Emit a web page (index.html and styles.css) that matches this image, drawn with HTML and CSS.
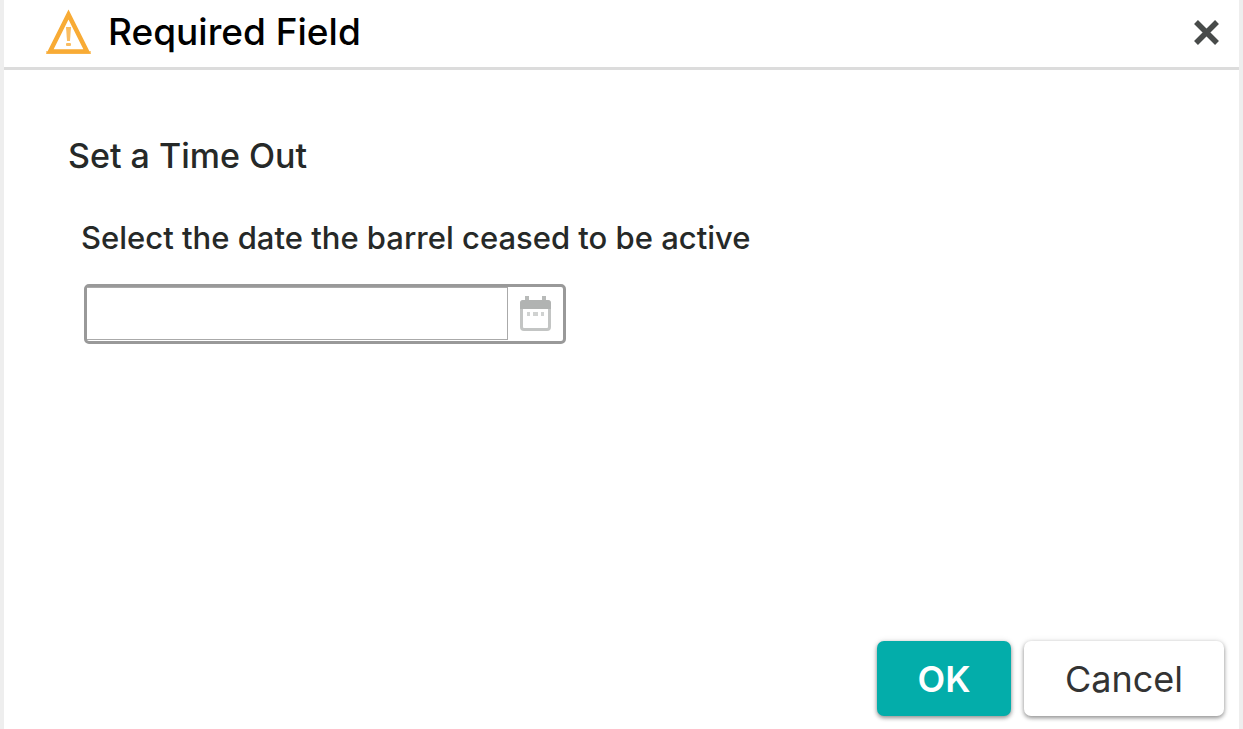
FILE: index.html
```html
<!DOCTYPE html>
<html lang="en">
<head>
    <meta charset="UTF-8">
    <meta name="viewport" content="width=device-width, initial-scale=1.0">
    <title>Required Field</title>
    <link rel="stylesheet" href="styles.css">
</head>
<body>
    <form class="dialog" role="dialog" aria-labelledby="dialog-title">
        <header class="dialog-header">
            <svg class="icon-warning" viewBox="0 0 46 46" aria-hidden="true">
                <path d="M22.500 5.500L41 42.500H4Z" fill="none" stroke="#f8ab35" stroke-width="4.500"/>
                <path d="M0 42h45v3H0z" fill="#f8ab35" opacity="0.6"/>
                <path d="M20 18h5l-1 14h-3z" fill="#f9bd62"/>
                <rect x="20" y="34" width="5" height="3" rx="1" fill="#f9bd62"/>
            </svg>
            <h1 class="dialog-title" id="dialog-title">Required Field</h1>
            <button class="close" type="button" aria-label="Close">
                <svg class="icon-close" viewBox="0 0 28 28" aria-hidden="true">
                    <path d="M4 4l21 21M25 4l-21 21" stroke="#484b4a" stroke-width="5.500"/>
                </svg>
            </button>
        </header>
        <main class="dialog-body">
            <h2 class="section-title">Set a Time Out</h2>
            <div class="field">
                <label class="field-label" for="end-date">Select the date the barrel ceased to be active</label>
                <div class="date-picker">
                    <input class="date-input" id="end-date" type="text">
                    <button class="date-button" type="button" aria-label="Open calendar">
                        <svg class="icon-calendar" viewBox="0 0 32 36" aria-hidden="true">
                            <path d="M5 0h4v5H5zM22 0h4v5h-4z" fill="#b8bab9"/>
                            <rect x="1.500" y="5.500" width="28" height="28" rx="2.500" fill="none" stroke="#c3c5c4" stroke-width="3"/>
                            <path d="M0 7a3 3 0 0 1 3-3h25a3 3 0 0 1 3 3v6H0z" fill="#b1b3b2"/>
                            <path d="M7 16h3v4H7zM13 16h5v4h-5zM21 16h3v4h-3z" fill="#d0d2d1"/>
                        </svg>
                    </button>
                </div>
            </div>
        </main>
        <footer class="dialog-footer">
            <button class="btn btn-primary" type="submit">OK</button>
            <button class="btn btn-cancel" type="button">Cancel</button>
        </footer>
    </form>
</body>
</html>
```
FILE: styles.css
```css
* {
    box-sizing: border-box;
}
body {
    margin: 0;
    font-family: "Inter", "Liberation Sans", sans-serif;
    font-weight: 500;
    color: #262928;
    background-color: #fff;
}
button, input {
    font: inherit;
    color: inherit;
}
button {
    padding: 0;
    border: none;
    background: none;
    cursor: pointer;
}
svg {
    display: block;
}
.dialog {
    display: flex;
    flex-direction: column;
    min-height: 100vh;
    border: solid #eee;
    border-width: 0 4px;
}
.dialog-header {
    display: flex;
    align-items: center;
    gap: 16px;
    padding: 10px 19px 13px 42px;
    border-bottom: 3px solid #dcdcdc;
}
.icon-warning {
    width: 46px;
    height: 46px;
    margin: -1px 0;
}
.dialog-title {
    flex: 1;
    margin: 0;
    font-size: 37px;
    font-weight: 500;
    line-height: 44px;
    color: #000;
}
.icon-close {
    width: 28px;
    height: 28px;
}
.dialog-body {
    flex: 1;
    padding: 64px 64px 32px;
}
.section-title {
    margin: 0;
    font-size: 34px;
    font-weight: 500;
    line-height: 44px;
}
.field {
    padding: 40px 0 0 13px;
}
.field-label {
    display: block;
    font-size: 31px;
    line-height: 40px;
}
.date-picker {
    display: flex;
    width: 482px;
    max-width: 100%;
    height: 60px;
    margin: 26px 3px 0;
    border: 3px solid #999;
    border-radius: 5px;
}
.date-input {
    flex: 1;
    min-width: 0;
    height: 53px;
    padding: 0 12px;
    border: 1px solid #aaa;
    border-left: none;
    background-color: #fff;
}
.date-button {
    display: flex;
    align-items: center;
    justify-content: center;
    width: 55px;
}
.icon-calendar {
    width: 32px;
    height: 36px;
}
.dialog-footer {
    display: flex;
    justify-content: flex-end;
    gap: 13px;
    padding: 13px 15px;
}
.btn {
    height: 75px;
    border-radius: 7px;
    font-size: 36px;
    font-weight: 400;
    color: #333;
    background-color: #fff;
    box-shadow: 0 2px 4px rgba(0, 0, 0, 0.4), 0 0 6px rgba(0, 0, 0, 0.1);
}
.btn-primary {
    width: 134px;
    font-weight: 600;
    color: #fff;
    background-color: #03adaa;
}
.btn-cancel {
    width: 200px;
}
```
